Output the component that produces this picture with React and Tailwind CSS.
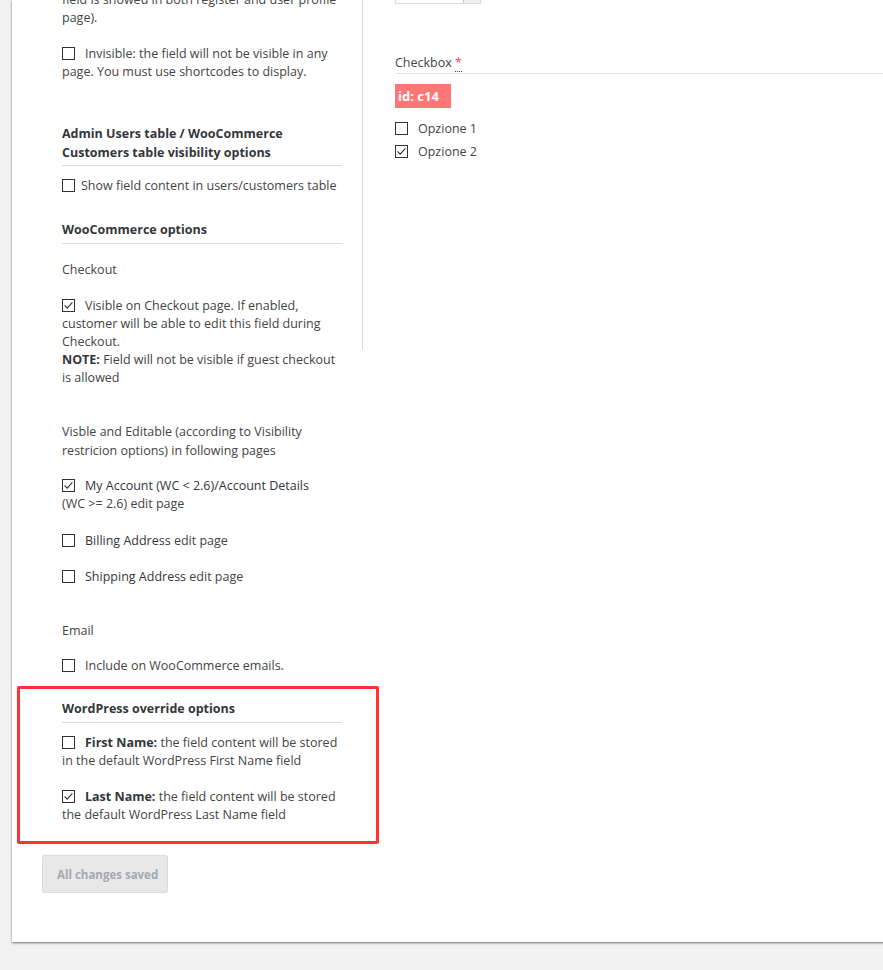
// App.jsx — field settings panel (left: visibility / WooCommerce options, right: field preview)

import React from 'react';

// small square checkbox as drawn by the browser theme
function Box({ checked = false, gap = 'mr-[10px]' }) {
  return (
    <svg width="13" height="13" viewBox="0 0 13 13" className={`inline-block align-[-2px] ${gap}`} aria-hidden="true">
      <rect x="0.5" y="0.5" width="12" height="12" fill="#fff" stroke="#333" />
      {checked && <path d="M2.6 6.4 L5.2 9.1 L10.4 3.4" fill="none" stroke="#333" strokeWidth="1.1" />}
    </svg>
  );
}

function Heading({ children, className = '' }) {
  return (
    <h3 className={`font-bold text-[#32373c] border-b border-[#dcdcdc] ${className}`}>{children}</h3>
  );
}

export default function App() {
  return (
    <div className="min-h-[970px] w-full overflow-hidden bg-[#f1f1f1] font-['Open_Sans',sans-serif] text-[12.5px] leading-[18px] text-[#444]">
      <div className="ml-3 -mr-6 bg-white pl-[50px] pb-[49px] shadow-[0_1px_2px_rgba(0,0,0,0.55)] flex items-start">
        {/* left column */}
        <div className="w-[280px] shrink-0 whitespace-nowrap">
          <p className="-mt-[9px]">
            field is showed in both register and user profile
            <br />
            page).
          </p>
          <p className="mt-[18px]">
            <Box />Invisible: the field will not be visible in any
            <br />
            page. You must use shortcodes to display.
          </p>

          <Heading className="mt-[43px] leading-[19px] pb-[3px]">
            Admin Users table / WooCommerce
            <br />
            Customers table visibility options
          </Heading>
          <p className="mt-[11px]">
            <Box gap="mr-[6px]" />Show field content in users/customers table
          </p>

          <Heading className="mt-[25px] leading-[19px] pb-[4px]">WooCommerce options</Heading>
          <p className="mt-[17px]">Checkout</p>
          <p className="mt-[18px]">
            <Box checked />Visible on Checkout page. If enabled,
            <br />
            customer will be able to edit this field during
            <br />
            Checkout.
            <br />
            <b className="text-[#32373c]">NOTE:</b> Field will not be visible if guest checkout
            <br />
            is allowed
          </p>

          <p className="mt-[35px] leading-[19px]">
            Visble and Editable (according to Visibility
            <br />
            restricion options) in following pages
          </p>
          <p className="mt-[17px]">
            <Box checked />
            <span className="text-[#32373c]">My Account (WC &lt; 2.6)/Account Details</span>
            <br />
            (WC &gt;= 2.6) edit page
          </p>
          <p className="mt-[19px]">
            <Box />
            <span className="text-[#32373c]">Billing Address</span> edit page
          </p>
          <p className="mt-[18px]">
            <Box />
            <span className="text-[#32373c]">Shipping Address</span> edit page
          </p>

          <p className="mt-[36px]">Email</p>
          <p className="mt-[17px]">
            <Box />Include on WooCommerce emails.
          </p>

          {/* highlighted block */}
          <div className="mt-[11px] -ml-[45px] w-[362px] rounded-[2px] border-[3px] border-[#ff3333] pl-[42px] pt-[11px] pb-[17px]">
            <div className="w-[280px]">
              <Heading className="pb-[4px]">WordPress override options</Heading>
              <p className="mt-[11px]">
                <Box />
                <b className="text-[#32373c]">First Name:</b> the field content will be stored
                <br />
                in the default WordPress First Name field
              </p>
              <p className="mt-[18px]">
                <Box checked />
                <b className="text-[#32373c]">Last Name:</b> the field content will be stored
                <br />
                the default WordPress Last Name field
              </p>
            </div>
          </div>

          <button
            disabled
            className="mt-[11px] -ml-5 block h-[38px] w-[126px] rounded-[2px] border border-[#dcdcdc] bg-[#e8e8e8] pl-[14px] pt-[1px] text-left text-[11.5px] font-bold text-[#a7aaad]"
          >
            All changes saved
          </button>
        </div>

        {/* right column: preview */}
        <div className="ml-5 flex-1 h-[350px] border-l border-[#dcdcdc] pl-8">
          <div className="-mt-[20px] flex h-[24px] w-[86px] border border-[#dcdcdc]">
            <div className="flex-1" />
            <div className="w-[17px] border-l border-[#c3c3c3] bg-[#efefef]" />
          </div>

          <div className="mt-[49px] border-b border-[#e5e5e5] pt-[1px] pb-[1px]">
            Checkbox{' '}
            <abbr title="required" className="no-underline border-b border-dotted border-[#ff0000] text-[#ff4a6b]">*</abbr>
          </div>

          <div className="mt-[10px] h-[24px] w-[56px] bg-[#ff7676] pl-[3px] text-[13px] font-bold leading-[24px] text-white">
            id: c14
          </div>

          <div className="mt-[12px] flex flex-col gap-[5px]">
            <label className="block">
              <Box />Opzione 1
            </label>
            <label className="block">
              <Box checked />Opzione 2
            </label>
          </div>
        </div>
      </div>
    </div>
  );
}
